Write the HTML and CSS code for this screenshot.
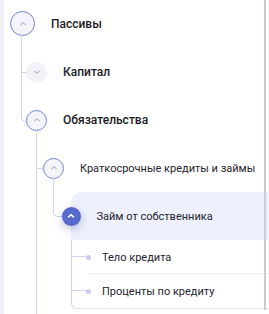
FILE: index.html
```html
<!DOCTYPE html>
<html lang="ru">
<head>
<meta charset="utf-8">
<link rel="stylesheet" href="styles.css">
</head>
<body>
<div class="panel">
  <div class="tree">
    <div class="row lv0">
      <span class="toggle big open"><svg viewBox="0 0 10 10"><polyline points="2.5,6 5,3.5 7.5,6"/></svg></span>
      <span class="label strong">Пассивы</span>
    </div>
    <div class="row lv1 mid">
      <span class="toggle"><svg viewBox="0 0 10 10"><polyline points="2.5,4 5,6.5 7.5,4"/></svg></span>
      <span class="label strong">Капитал</span>
    </div>
    <div class="row lv1 last">
      <span class="toggle open"><svg viewBox="0 0 10 10"><polyline points="2.5,6 5,3.5 7.5,6"/></svg></span>
      <span class="label strong">Обязательства</span>
    </div>
    <div class="kids k1">
      <div class="row lv2">
        <span class="toggle open"><svg viewBox="0 0 10 10"><polyline points="2.5,6 5,3.5 7.5,6"/></svg></span>
        <span class="label">Краткосрочные кредиты и займы</span>
      </div>
      <div class="row lv3">
        <div class="band">
          <span class="toggle active"><svg viewBox="0 0 10 10"><polyline points="2.5,6 5,3.5 7.5,6"/></svg></span>
          <span class="label">Займ от собственника</span>
        </div>
      </div>
      <div class="leaves">
        <div class="leaf"><span class="dot"></span><span class="label">Тело кредита</span></div>
        <div class="leaf"><span class="dot"></span><span class="label">Проценты по кредиту</span></div>
      </div>
    </div>
  </div>
  <div class="divider"></div>
</div>
</body>
</html>
```

FILE: styles.css
```css
* { box-sizing: border-box; }
html, body { margin: 0; padding: 0; background: #fff; }
body {
  font-family: Roboto, "Noto Sans", Arial, sans-serif;
  font-size: 11px;
  color: #24242e;
}
.panel {
  position: relative;
  width: 269px;
  height: 314px;
  border-left: 4px solid #f0f1f7;
  overflow: hidden;
}
.divider {
  position: absolute;
  left: 260px;
  top: 0;
  width: 2px;
  height: 310px;
  background: #cbcbd7;
  z-index: 5;
}
.tree { display: flex; flex-direction: column; padding-top: 1px; }

.row {
  position: relative;
  height: 48px;
  display: flex;
  align-items: center;
}
.label { white-space: nowrap; }
.label.strong { font-weight: 500; font-size: 12px; color: #1c1c25; }

.toggle {
  position: relative;
  flex: none;
  width: 21px;
  height: 21px;
  border-radius: 50%;
  background: #f2f3f9;
  display: flex;
  align-items: center;
  justify-content: center;
  margin-right: 16px;
}
.toggle svg { width: 10px; height: 10px; }
.toggle polyline { fill: none; stroke: #9a9cb0; stroke-width: 1; stroke-linecap: round; stroke-linejoin: round; }
.toggle.open { border: 1.5px solid #7584d8; background: #f4f5fb; }
.toggle.big { width: 25px; height: 25px; }
.toggle.active {
  width: 19px; height: 19px;
  background: #5669cc;
  box-shadow: 0 3px 8px rgba(70, 80, 150, 0.35);
  margin-left: -9.5px;
}
.toggle.active polyline { stroke: #fff; stroke-width: 1.6; }

.lv0 { padding-left: 6px; height: 45px; }
.lv0::after {
  content: ""; position: absolute; left: 17px; top: 34px; bottom: 0;
  width: 1px; background: #cdd3f0;
}
.lv1 { padding-left: 22px; }
.lv1.mid { margin-top: 2px; }
.lv1.mid::before {
  content: ""; position: absolute; left: 17px; top: -2px; bottom: 0;
  width: 1px; background: #cdd3f0;
}
.lv1.mid::after {
  content: ""; position: absolute; left: 17px; top: 24px; width: 5px;
  height: 1px; background: #cdd3f0;
}
.lv1.last::before {
  content: ""; position: absolute; left: 17px; top: 0; width: 6px; height: 25px;
  border-left: 1px solid #cdd3f0; border-bottom: 1px solid #cdd3f0;
  border-bottom-left-radius: 5px;
}
.lv1.last::after {
  content: ""; position: absolute; left: 32px; top: 34px; bottom: 0;
  width: 1px; background: #cdd3f0;
}
.k1 { position: relative; display: flex; flex-direction: column; }
.k1::before {
  content: ""; position: absolute; left: 32px; top: 0; bottom: -20px;
  width: 1px; background: #cdd3f0;
}
.lv2 { padding-left: 39px; }
.lv2::before {
  content: ""; position: absolute; left: 32px; top: 24px; width: 7px;
  height: 1px; background: #cdd3f0;
}
.lv2::after {
  content: ""; position: absolute; left: 49px; top: 34px; bottom: 0;
  width: 1px; background: #cdd3f0;
}
.lv3 { padding-left: 67px; }
.lv3::before {
  content: ""; position: absolute; left: 49px; top: 0; width: 9px; height: 24px;
  border-left: 1px solid #cdd3f0; border-bottom: 1px solid #cdd3f0;
  border-bottom-left-radius: 5px;
}
.band {
  flex: 1;
  align-self: stretch;
  display: flex;
  align-items: center;
  background: #eef0fd;
  border-top-left-radius: 10px;
}
.leaves {
  margin-left: 67px;
  border-left: 1px solid #cdd3f0;
  border-bottom: 1px solid #e2e2ea;
  border-bottom-left-radius: 6px;
  display: flex;
  flex-direction: column;
}
.leaf {
  height: 34px;
  display: flex;
  align-items: center;
  position: relative;
  padding-left: 14px;
}
.leaf::before {
  content: ""; position: absolute; left: 0; top: 16px; width: 16px; height: 1px;
  background: #cdd3f0;
}
.leaf + .leaf::after {
  content: ""; position: absolute; left: 16px; right: 0; top: -1px; height: 1px;
  background: #ececf2;
}
.dot {
  position: relative;
  width: 5px; height: 5px; border-radius: 50%;
  background: #c6cdef;
  margin-right: 11px;
  flex: none;
}
```
